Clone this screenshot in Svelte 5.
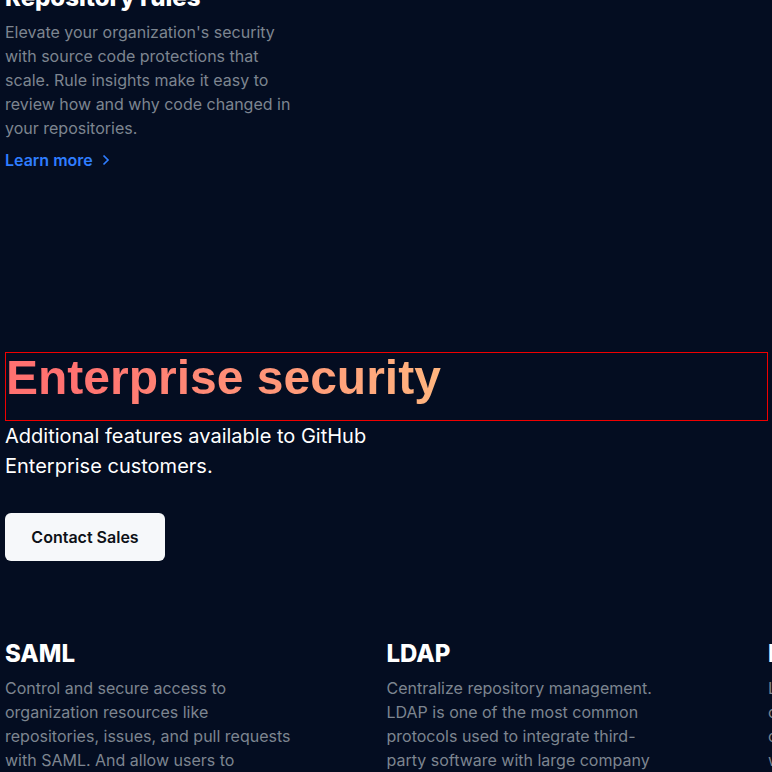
<script>
  const rules = [
    "Elevate your organization's security",
    'with source code protections that',
    'scale. Rule insights make it easy to',
    'review how and why code changed in',
    'your repositories.'
  ];
  const features = [
    {
      title: 'SAML',
      lines: ['Control and secure access to', 'organization resources like', 'repositories, issues, and pull requests', 'with SAML. And allow users to']
    },
    {
      title: 'LDAP',
      lines: ['Centralize repository management.', 'LDAP is one of the most common', 'protocols used to integrate third-', 'party software with large company']
    },
    {
      title: 'IP allow list',
      lines: ['Limit access to enterprise assets', 'on an allowed set of source IPs,', 'configured by your administrators', 'with support for your network']
    }
  ];
</script>

<main>
  <article class="feature">
    <h3>Repository rules</h3>
    <p>{#each rules as line}<span class="line">{line}</span>{/each}</p>
    <a class="more" href="#rules">
      Learn more
      <svg width="8" height="12" viewBox="0 0 8 12" fill="none" aria-hidden="true">
        <path d="M1.5 1.5 L6 6 L1.5 10.5" stroke="currentColor" stroke-width="1.7" />
      </svg>
    </a>
  </article>

  <section class="enterprise">
    <div class="outlined">
      <h2><span>Enterprise security</span></h2>
    </div>
    <p class="lead">
      <span class="line">Additional features available to GitHub</span>
      <span class="line">Enterprise customers.</span>
    </p>
    <button type="button">Contact Sales</button>
  </section>

  <section class="columns">
    {#each features as feature}
      <article class="feature">
        <h3>{feature.title}</h3>
        <p>{#each feature.lines as line}<span class="line">{line}</span>{/each}</p>
      </article>
    {/each}
  </section>
</main>

<style>
  :global(body) {
    background: #040d21;
  }

  main {
    box-sizing: border-box;
    height: 100vh;
    overflow: hidden;
    padding: 0 4px 0 5px;
    background: #040d21;
    color: #fff;
    font-family: Inter, 'Liberation Sans', sans-serif;
  }

  h2,
  h3,
  p {
    margin: 0;
  }

  .line {
    display: block;
    white-space: nowrap;
  }

  main > .feature {
    margin-top: -18px;
  }

  .feature h3 {
    font-size: 24px;
    line-height: 32px;
    font-weight: 800;
    white-space: nowrap;
  }

  .feature p {
    margin-top: 6px;
    font-size: 16px;
    line-height: 24px;
    color: #7d8590;
  }

  .more {
    display: inline-flex;
    align-items: center;
    gap: 9px;
    margin-top: 8px;
    font-size: 16px;
    line-height: 24px;
    font-weight: 600;
    color: #2f7dff;
    text-decoration: none;
  }

  .enterprise {
    padding-top: 180px;
  }

  .outlined {
    padding-bottom: 18px;
    border: 1px solid #f00000;
  }

  h2 {
    font-family: 'Liberation Sans', Arial, sans-serif;
    font-size: 48px;
    line-height: 49px;
    font-weight: 700;
  }

  h2 span {
    background: linear-gradient(90deg, #ff7170 15%, #ffb57f 100%);
    -webkit-background-clip: text;
    background-clip: text;
    color: transparent;
  }

  .lead {
    font-size: 20px;
    line-height: 30px;
  }

  button {
    min-width: 160px;
    margin-top: 32px;
    height: 48px;
    padding: 0 24px;
    border: 0;
    border-radius: 6px;
    background: #f6f8fa;
    color: #0d1117;
    font: 600 16px/24px Inter, 'Liberation Sans', sans-serif;
    cursor: pointer;
  }

  .columns {
    display: grid;
    grid-auto-flow: column;
    grid-auto-columns: 50%;
    padding-top: 77px;
  }
</style>
